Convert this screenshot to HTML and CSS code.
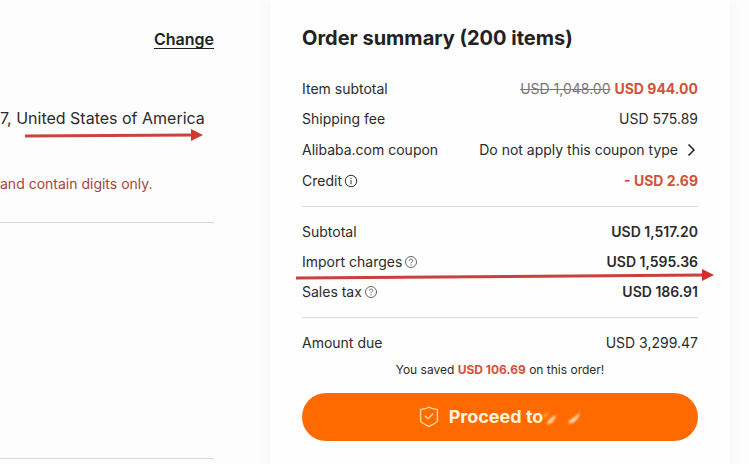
FILE: index.html
```html
<!DOCTYPE html>
<html lang="en">
<head>
  <meta charset="UTF-8" />
  <meta name="viewport" content="width=device-width, initial-scale=1.0"/>
  <title>Checkout</title>
  <link rel="stylesheet" href="styles.css">
</head>
<body>
  <div class="checkout">
    <main class="details">
      <section class="address">
        <a class="change-link" href="#address">Change</a>
        <div class="address-line">
          7, United States of America
          <svg class="address-arrow" viewBox="0 0 178 12" aria-hidden="true">
            <path d="M0 7L168 6" stroke="#c9443c" stroke-width="3"/>
            <path d="M166 0L178 6L166 12Z" fill="#d0392f"/>
          </svg>
        </div>
        <p class="error">and contain digits only.</p>
      </section>
      <section class="items"></section>
    </main>

    <aside class="summary">
      <h2>Order summary (200 items)</h2>
      <dl class="group">
        <div class="row">
          <dt>Item subtotal</dt>
          <dd><s>USD 1,048.00</s> <b class="sale">USD 944.00</b></dd>
        </div>
        <div class="row">
          <dt>Shipping fee</dt>
          <dd>USD 575.89</dd>
        </div>
        <div class="row row-coupon">
          <dt>Alibaba.com coupon</dt>
          <dd>
            <button class="coupon-btn" type="button">
              Do not apply this coupon type
              <svg width="14" height="14" viewBox="0 0 14 14" fill="none" stroke="#222" stroke-width="1.5" aria-hidden="true"><path d="M4.5 1.5L10 7L4.5 12.5"/></svg>
            </button>
          </dd>
        </div>
        <div class="row">
          <dt>Credit
            <svg class="hint" viewBox="0 0 14 14" fill="none" stroke="#333" aria-hidden="true"><circle cx="7" cy="7" r="5.7"/><path d="M7 6.2V10.3M7 3.8V5"/></svg>
          </dt>
          <dd class="sale">- USD 2.69</dd>
        </div>
      </dl>
      <dl class="group group-strong">
        <div class="row">
          <dt>Subtotal</dt>
          <dd>USD 1,517.20</dd>
        </div>
        <div class="row row-import">
          <dt>Import charges
            <svg class="hint" viewBox="0 0 14 14" fill="none" stroke="#555" stroke-width="0.9" aria-hidden="true"><circle cx="7" cy="7" r="5.5"/><path d="M5.3 5.7C5.3 3.5 8.7 3.5 8.7 5.6C8.7 6.8 7 6.8 7 8.3M7 9.3V10.4"/></svg>
          </dt>
          <dd>USD 1,595.36</dd>
          <svg class="import-arrow" viewBox="0 0 418 12" preserveAspectRatio="none" aria-hidden="true">
            <path d="M0 9L408 6" stroke="#c9403c" stroke-width="3"/>
            <path d="M406 0L418 6L406 12Z" fill="#d0302b"/>
          </svg>
        </div>
        <div class="row">
          <dt>Sales tax
            <svg class="hint" viewBox="0 0 14 14" fill="none" stroke="#555" stroke-width="0.9" aria-hidden="true"><circle cx="7" cy="7" r="5.5"/><path d="M5.3 5.7C5.3 3.5 8.7 3.5 8.7 5.6C8.7 6.8 7 6.8 7 8.3M7 9.3V10.4"/></svg>
          </dt>
          <dd>USD 186.91</dd>
        </div>
      </dl>
      <dl class="group">
        <div class="row">
          <dt>Amount due</dt>
          <dd>USD 3,299.47</dd>
        </div>
      </dl>
      <p class="saved">You saved <b class="sale">USD 106.69</b> on this order!</p>
      <button class="proceed-btn" type="button">
        <svg class="shield" width="20" height="22" viewBox="0 0 20 22" fill="none" stroke="#ffd08a" stroke-width="1.5" stroke-linejoin="round" aria-hidden="true">
          <path d="M10 1.2C12.5 2.8 15.5 3.2 18.4 3.4V14.8C18.4 16.6 13.5 18.6 10 20.6C6.5 18.6 1.6 16.6 1.6 14.8V3.4C4.5 3.2 7.5 2.8 10 1.2Z"/>
          <path d="M6 9.8L9 12.8L14.2 7.5"/>
        </svg>
        <span class="proceed-label">Proceed to</span>
        <svg class="smudge" width="38" height="20" viewBox="0 0 38 20" aria-hidden="true">
          <path d="M0 8L6 5L2 11Z" fill="#ffb066"/>
          <path d="M4 17C8 18 12 13 13 8C9 10 5 13 4 17Z" fill="#ffe0b8"/>
          <path d="M25 15C29 19 36 12 37 5C33 10 28 12 25 15Z" fill="#ffe0b8"/>
        </svg>
      </button>
    </aside>
  </div>
</body>
</html>
```
FILE: styles.css
```css
:root {
  --text-color: #2b2b2b;
  --sale-color: #d2513a;
  --line-color: #d8d8d8;
  --orange: #ff6a00;
}

* {
  margin: 0;
  padding: 0;
  box-sizing: border-box;
}
body {
  font-family: Inter, 'Liberation Sans', sans-serif;
  font-size: 14px;
  line-height: 30px;
  color: var(--text-color);
  background: #fdfdfd;
}
button {
  font: inherit;
  color: inherit;
  border: none;
  background: none;
  cursor: pointer;
}

.checkout {
  display: grid;
  grid-template-columns: minmax(0, 1fr) 460px;
  min-height: 100vh;
  padding-right: 19px;
  overflow: hidden;
}

.details {
  padding-right: 56px;
}
.address,
.items {
  display: flex;
  flex-direction: column;
  border-bottom: 1px solid var(--line-color);
}
.address {
  padding: 24px 0 23px;
}
.items {
  height: 236px;
}
.change-link {
  align-self: flex-end;
  font-size: 16px;
  font-weight: 600;
  color: #222;
  text-underline-offset: 3px;
}
.address-line {
  position: relative;
  align-self: flex-start;
  margin-top: 49px;
  font-size: 16px;
  white-space: nowrap;
}
.address-arrow {
  position: absolute;
  top: 26px;
  right: 2px;
  width: 178px;
  height: 12px;
}
.error {
  margin-top: 36px;
  color: #a8443a;
}

.summary {
  padding: 24px 32px;
  background: #fefefe;
  box-shadow: 0 0 12px rgba(0, 0, 0, 0.05);
}
.summary h2 {
  margin-bottom: 22px;
  font-size: 20px;
  font-weight: 700;
  line-height: 28px;
  color: #222;
}
.group + .group {
  margin-top: 10px;
  padding-top: 10px;
  border-top: 1px solid var(--line-color);
}
.row {
  display: flex;
  justify-content: space-between;
}
.row dt {
  display: flex;
  align-items: center;
  gap: 2px;
}
.row-coupon {
  line-height: 32px;
}
.row-import {
  position: relative;
}
.hint {
  width: 14px;
  height: 14px;
}
.group-strong dd {
  font-weight: 600;
}
.row s {
  color: #777;
}
.sale,
.row .sale {
  font-weight: 700;
  color: var(--sale-color);
}
.coupon-btn {
  display: flex;
  align-items: center;
  gap: 6px;
}
.import-arrow {
  position: absolute;
  top: 22px;
  left: -6px;
  width: calc(100% + 22px);
  height: 12px;
}

.saved {
  font-size: 12px;
  line-height: 24px;
  text-align: center;
}
.proceed-btn {
  display: flex;
  align-items: center;
  justify-content: center;
  width: 100%;
  height: 48px;
  margin-top: 11px;
  border-radius: 24px;
  background: var(--orange);
  color: #fff3dc;
  font-size: 18px;
  font-weight: 700;
}
.proceed-label {
  margin-left: 10px;
}
.smudge {
  filter: blur(1px);
}
```
